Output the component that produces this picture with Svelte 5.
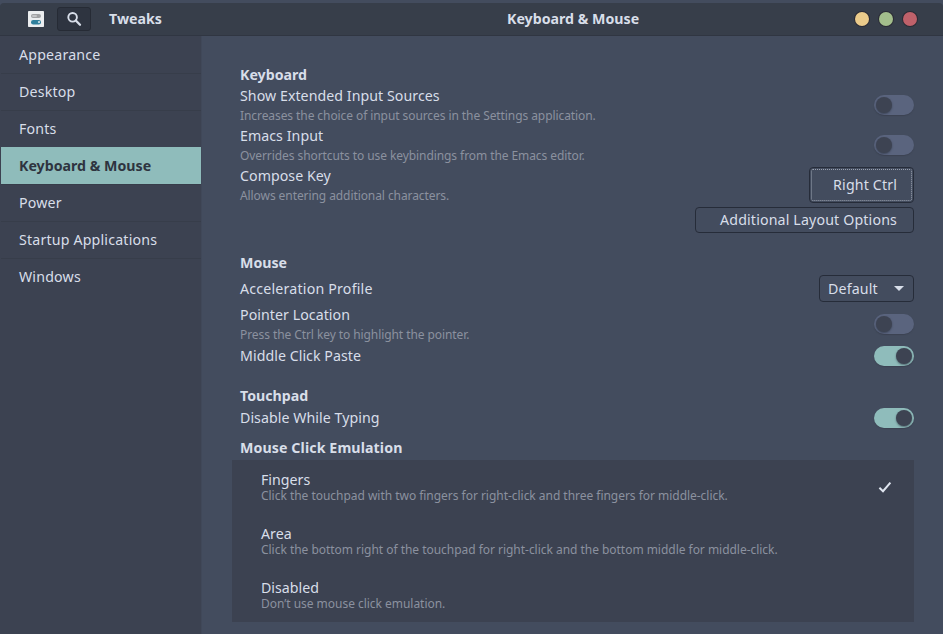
<script>
  const pages = [
    "Appearance",
    "Desktop",
    "Fonts",
    "Keyboard & Mouse",
    "Power",
    "Startup Applications",
    "Windows",
  ];

  const emulation = [
    { name: "Fingers", desc: "Click the touchpad with two fingers for right-click and three fingers for middle-click." },
    { name: "Area", desc: "Click the bottom right of the touchpad for right-click and the bottom middle for middle-click." },
    { name: "Disabled", desc: "Don’t use mouse click emulation." },
  ];

  let page = $state("Keyboard & Mouse");
  let click = $state("Fingers");
  let toggles = $state({
    extended: false,
    emacs: false,
    pointer: false,
    paste: true,
    typing: true,
  });
</script>

{#snippet toggle(key, label)}
  <button
    class="switch"
    class:on={toggles[key]}
    role="switch"
    aria-checked={toggles[key]}
    aria-label={label}
    onclick={() => (toggles[key] = !toggles[key])}
  >
    <span class="knob"></span>
  </button>
{/snippet}

{#snippet label(title, desc)}
  <div class="label">
    <div class="title">{title}</div>
    {#if desc}<div class="desc">{desc}</div>{/if}
  </div>
{/snippet}

<div class="window">
  <header>
    <div class="left">
      <svg class="logo" viewBox="0 0 16 16" width="16" height="16">
        <rect width="16" height="16" rx="0.8" fill="#eceef0" />
        <rect x="3" y="3" width="10" height="4" rx="2" fill="#a0a1a3" />
        <rect x="4" y="4" width="5" height="2" rx="1" fill="#c4c5c7" />
        <rect x="3" y="9" width="10" height="4.4" rx="2.2" fill="#2f7f9c" />
        <circle cx="11" cy="11.1" r="1.1" fill="#cfe3ea" />
      </svg>
      <button class="search" aria-label="Search">
        <svg viewBox="0 0 16 16" width="16" height="16" fill="none" stroke="#d8dee9">
          <circle cx="6.6" cy="6.3" r="4.3" stroke-width="1.9" />
          <path d="M9.8 9.5 14 13.7" stroke-width="2.3" stroke-linecap="round" />
        </svg>
      </button>
      <span class="app-name">Tweaks</span>
    </div>
    <div class="right">
      <span class="page-name">{page}</span>
      <div class="controls">
        <i class="min"></i>
        <i class="max"></i>
        <i class="close"></i>
      </div>
    </div>
  </header>

  <div class="body">
    <nav>
      {#each pages as p}
        <button class="page" class:active={p === page} onclick={() => (page = p)}>{p}</button>
      {/each}
    </nav>

    <main>
      <h2>Keyboard</h2>
      <div class="row tall">
        {@render label("Show Extended Input Sources", "Increases the choice of input sources in the Settings application.")}
        {@render toggle("extended", "Show Extended Input Sources")}
      </div>
      <div class="row tall">
        {@render label("Emacs Input", "Overrides shortcuts to use keybindings from the Emacs editor.")}
        {@render toggle("emacs", "Emacs Input")}
      </div>
      <div class="row tall">
        {@render label("Compose Key", "Allows entering additional characters.")}
        <button class="btn compose">Right Ctrl</button>
      </div>
      <div class="row extra">
        <button class="btn layout">Additional Layout Options</button>
      </div>

      <h2 class="mouse">Mouse</h2>
      <div class="row accel">
        {@render label("Acceleration Profile")}
        <button class="btn combo">
          Default
          <svg viewBox="0 0 10 5" width="10" height="5"><path d="M0 0h10L5 5z" fill="#d8dee9" /></svg>
        </button>
      </div>
      <div class="row tall">
        {@render label("Pointer Location", "Press the Ctrl key to highlight the pointer.")}
        {@render toggle("pointer", "Pointer Location")}
      </div>
      <div class="row short">
        {@render label("Middle Click Paste")}
        {@render toggle("paste", "Middle Click Paste")}
      </div>

      <h2 class="touchpad">Touchpad</h2>
      <div class="row short">
        {@render label("Disable While Typing")}
        {@render toggle("typing", "Disable While Typing")}
      </div>
      <h2 class="emulation">Mouse Click Emulation</h2>
      <div class="list">
        {#each emulation as e}
          <button class="option" onclick={() => (click = e.name)}>
            <span class="text">
              <span class="title">{e.name}</span>
              <span class="desc">{e.desc}</span>
            </span>
            {#if click === e.name}
              <svg viewBox="0 0 14 12" width="14" height="12" fill="none" stroke="#e0e6f0" stroke-width="2">
                <path d="M1.4 6.8 5 10.2 12.4 1.7" />
              </svg>
            {/if}
          </button>
        {/each}
      </div>
    </main>
  </div>
</div>

<style>
  :global(body) {
    background: #434c5e;
  }

  * {
    box-sizing: border-box;
  }

  button {
    font: inherit;
    letter-spacing: inherit;
    color: inherit;
    background: none;
    border: none;
    padding: 0;
    margin: 0;
  }

  .window {
    width: 943px;
    height: 634px;
    padding-top: 3px;
    display: flex;
    flex-direction: column;
    overflow: hidden;
    font-family: "Noto Sans", sans-serif;
    font-size: 14.2px;
    color: #d8dee9;
    background: #434c5e;
  }

  header {
    display: flex;
    height: 33px;
    flex: none;
    background: #373e4a;
    border-bottom: 1px solid #303642;
    border-radius: 4px 4px 0 0;
    font-weight: bold;
  }

  .left {
    width: 202px;
    display: flex;
    align-items: center;
    padding-left: 28px;
  }

  .search {
    width: 34px;
    height: 24px;
    margin: 0 18px 0 13px;
    display: flex;
    align-items: center;
    justify-content: center;
    border: 1px solid #262b35;
    border-radius: 3px;
    background: #2e3440;
  }

  .app-name,
  .page-name {
    padding-bottom: 2px;
  }

  .right {
    flex: 1;
    display: flex;
    align-items: center;
    justify-content: space-between;
    padding: 0 26px 0 305px;
  }

  .controls {
    display: flex;
    gap: 10px;
  }

  .controls i {
    width: 14px;
    height: 14px;
    border-radius: 50%;
    box-shadow: 0 0 0 1px #2b2b35;
  }

  .min { background: #ebcb8b; }
  .max { background: #a3be8c; }
  .close { background: #bf616a; }

  .body {
    display: flex;
    flex: 1;
    min-height: 0;
  }

  nav {
    width: 202px;
    padding-left: 1px;
    background: #3c4251;
    border-right: 1px solid #404859;
    display: flex;
    flex-direction: column;
    letter-spacing: 0.18px;
  }

  .page {
    height: 37px;
    flex: none;
    padding: 0 0 1px 18px;
    text-align: left;
    border-top: 1px solid #373d4a;
  }

  .page:first-child {
    border-top-color: transparent;
  }

  .page.active {
    background: #8fbcbb;
    border-top-color: #8fbcbb;
    color: #2e3440;
    font-weight: bold;
    letter-spacing: 0;
  }

  main {
    flex: 1;
    padding: 28px 29px 0 38px;
  }

  h2 {
    margin: 0;
    height: 21px;
    line-height: 21px;
    font-size: inherit;
    font-weight: bold;
  }

  h2.mouse {
    margin-top: 19px;
  }

  h2.touchpad {
    margin-top: 17px;
  }

  h2.emulation {
    margin-top: 7px;
    letter-spacing: 0.1px;
  }

  .row {
    display: flex;
    align-items: center;
    justify-content: space-between;
  }

  .tall { height: 40px; }
  .short { height: 24px; }
  .accel { height: 31px; }

  .extra {
    height: 28px;
    justify-content: flex-end;
    padding-top: 2px;
  }

  .tall .label {
    padding-top: 2px;
  }

  .accel .label {
    padding-top: 1px;
  }

  .label .title {
    line-height: 20px;
    letter-spacing: 0.05px;
  }

  .accel .title {
    letter-spacing: 0.2px;
  }

  .desc {
    font-size: 12px;
    line-height: 20px;
    letter-spacing: -0.08px;
    color: #8b919f;
  }

  .switch {
    width: 40px;
    height: 20px;
    padding: 2px;
    display: flex;
    border-radius: 10px;
    background: #5a647e;
    box-shadow: 0 1px 1px #3c4353;
  }

  .switch.on {
    justify-content: flex-end;
    background: #8fbcbb;
  }

  .knob {
    width: 16px;
    height: 16px;
    border-radius: 50%;
    background: #3d4352;
    box-shadow: 0 1px 2px rgba(40, 46, 60, 0.6);
  }

  .btn {
    border: 1px solid #262c39;
    border-radius: 4px;
    text-align: right;
    height: 26px;
    line-height: 20px;
    letter-spacing: 0.15px;
  }

  .compose {
    width: 105px;
    height: 36px;
    padding-right: 16px;
    outline: 1px dotted #9aa1af;
    outline-offset: -3px;
  }

  .layout {
    width: 219px;
    padding-right: 16px;
  }

  .combo {
    width: 95px;
    height: 27px;
    padding: 0 9px 0 8px;
    display: flex;
    align-items: center;
    justify-content: space-between;
  }

  .list {
    margin: 2px 0 0 -8px;
    background: #3c4251;
  }

  .option {
    width: 100%;
    height: 54px;
    padding: 0 22px 0 29px;
    display: flex;
    align-items: center;
    justify-content: space-between;
    text-align: left;
  }

  .text {
    display: flex;
    flex-direction: column;
    padding-top: 2px;
  }

  .option .title,
  .option .desc {
    line-height: 16px;
  }

  .option .desc {
    letter-spacing: -0.03px;
  }
</style>
